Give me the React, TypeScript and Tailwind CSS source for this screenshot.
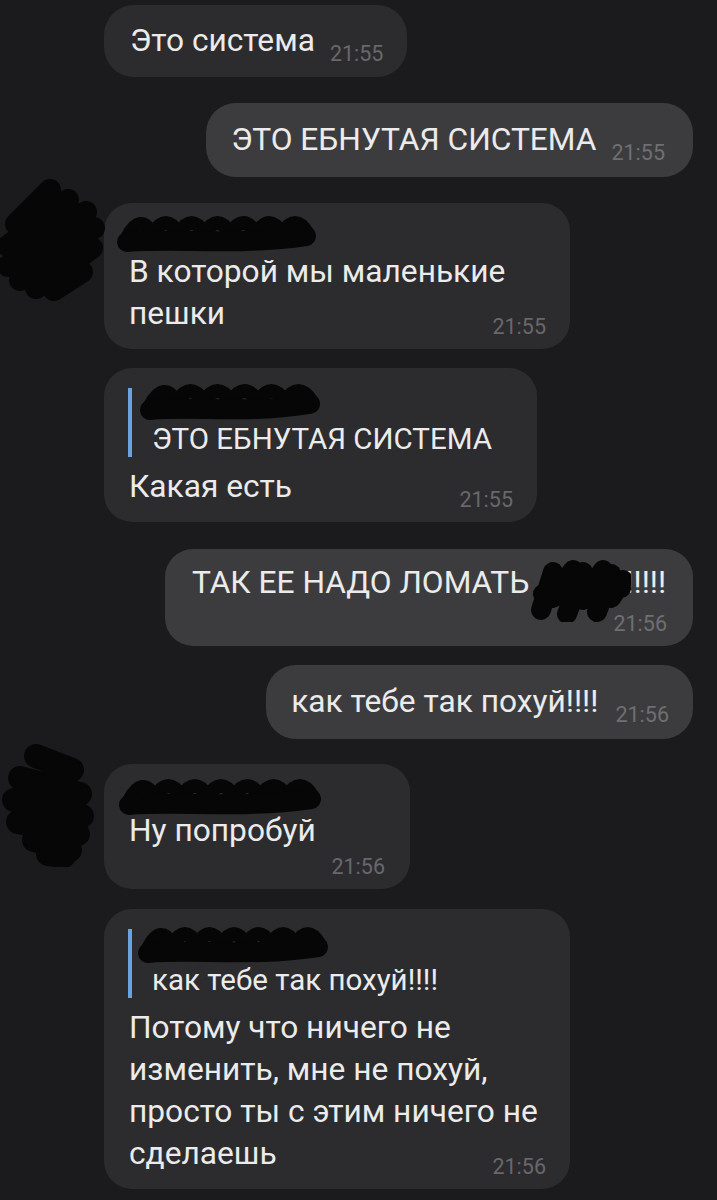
import React from "react";

const font = "font-['Roboto','Noto_Sans',sans-serif]";

function Time({ t, out = false }: { t: string; out?: boolean }) {
  return (
    <span
      className={`text-[21.5px] leading-none whitespace-nowrap ${
        out ? "text-[#6f6f72]" : "text-[#68686b]"
      }`}
    >
      {t}
    </span>
  );
}

function NameScribble({ w = 205 }: { w?: number }) {
  const n = Math.max(4, Math.round((w - 20) / 26));
  const step = (w - 24) / n;
  let arches = `M12 30`;
  for (let i = 0; i < n; i++) {
    const x0 = 12 + i * step;
    arches += ` Q${(x0 + step / 2).toFixed(1)} 4 ${(x0 + step).toFixed(1)} 26`;
  }
  return (
    <svg width={w} height="50" viewBox={`0 0 ${w} 50`} className="block" fill="none">
      <path d={arches} stroke="#060606" strokeWidth="14" strokeLinecap="round" strokeLinejoin="round" />
      <path
        d={`M12 34 C${w * 0.3} 30, ${w * 0.6} 38, ${w - 14} 28`}
        stroke="#060606"
        strokeWidth="20"
        strokeLinecap="round"
      />
    </svg>
  );
}

function AvatarScribbleA() {
  return (
    <svg width="110" height="125" viewBox="0 0 110 125" fill="none">
      <path
        d="M16 46 L50 12 M8 68 L68 22 M8 88 L86 34 M20 102 L94 50 M36 110 L92 70 M54 112 L82 94"
        stroke="#060606"
        strokeWidth="22"
        strokeLinecap="round"
        strokeLinejoin="round"
      />
    </svg>
  );
}

function AvatarScribbleB() {
  return (
    <svg width="100" height="125" viewBox="0 0 100 125" fill="none">
      <path
        d="M36 14 L72 28 M20 36 L80 52 M14 58 L82 74 M18 80 L78 92 M34 98 L70 108 M48 112 L64 114"
        stroke="#060606"
        strokeWidth="24"
        strokeLinecap="round"
      />
    </svg>
  );
}

export default function App() {
  return (
    <div className={`min-h-[1200px] w-[717px] bg-[#1b1b1d] text-[#ebebeb] ${font} overflow-hidden`}>
      {/* 1 */}
      <div className="pl-[104px] pt-[5px]">
        <div className="inline-flex items-baseline rounded-[30px] bg-[#2c2c2f] pl-[26px] pr-[24px] py-[15px]">
          <span className="text-[31.7px] leading-[42px]">Это система</span>
          <span className="ml-[15px] translate-y-[10px]">
            <Time t="21:55" />
          </span>
        </div>
      </div>

      {/* 2 */}
      <div className="mt-[26px] flex justify-end pr-[24px]">
        <div className="inline-flex items-baseline rounded-[30px] bg-[#3c3c3f] pl-[25px] pr-[28px] py-[16px]">
          <span className="text-[31.7px] leading-[42px]">ЭТО ЕБНУТАЯ СИСТЕМА</span>
          <span className="ml-[15px] translate-y-[10px]">
            <Time t="21:55" out />
          </span>
        </div>
      </div>

      {/* 3 */}
      <div className="relative mt-[26px] pl-[104px]">
        <div className="absolute left-0 top-[-25px]">
          <AvatarScribbleA />
        </div>
        <div className="w-[466px] rounded-[28px] bg-[#2c2c2f] pl-[25px] pr-[24px] pt-[15px] pb-[14px]">
          <div className="relative h-[33px]">
            <div className="absolute left-[-14px] top-[-10px]">
              <NameScribble w={205} />
            </div>
          </div>
          <div className="text-[31.7px] leading-[42px]">В которой мы маленькие</div>
          <div className="flex items-baseline justify-between">
            <span className="text-[31.7px] leading-[42px]">пешки</span>
            <span className="translate-y-[10px]">
              <Time t="21:55" />
            </span>
          </div>
        </div>
      </div>

      {/* 4 */}
      <div className="mt-[19px] pl-[104px]">
        <div className="w-[433px] rounded-[28px] bg-[#2c2c2f] pl-[24px] pr-[24px] pt-[20px] pb-[14px]">
          <div className="border-l-[4px] border-[#6ba3df] pl-[20px]">
            <div className="relative h-[33px]">
              <div className="absolute left-[-14px] top-[-12px]">
                <NameScribble w={186} />
              </div>
            </div>
            <div className="text-[29.5px] leading-[36px]">ЭТО ЕБНУТАЯ СИСТЕМА</div>
          </div>
          <div className="mt-[9px] flex items-baseline justify-between pl-[1px]">
            <span className="text-[31.7px] leading-[42px]">Какая есть</span>
            <span className="translate-y-[10px]">
              <Time t="21:55" />
            </span>
          </div>
        </div>
      </div>

      {/* 5 */}
      <div className="mt-[27px] flex justify-end pr-[24px]">
        <div className="w-[528px] rounded-[28px] bg-[#3c3c3f] pl-[27px] pr-[26px] pt-[13px] pb-[11px]">
          <div className="text-[31.7px] leading-[42px] whitespace-nowrap">
            ТАК ЕЕ НАДО ЛОМАТЬ
            <span className="relative inline-block h-[42px] w-[96px] align-top">
              <svg
                width="104"
                height="64"
                viewBox="0 0 104 64"
                fill="none"
                className="absolute left-[-2px] top-[-4px]"
              >
                <path
                  d="M14 52 L26 14 M26 40 L46 12 M40 56 L56 14 M56 42 L76 12 M70 54 L84 16 M84 40 L96 22 M16 36 L94 30"
                  stroke="#060606"
                  strokeWidth="20"
                  strokeLinecap="round"
                />
              </svg>
            </span>
            !!!!!
          </div>
          <div className="mt-[9px] flex justify-end">
            <Time t="21:56" out />
          </div>
        </div>
      </div>

      {/* 6 */}
      <div className="mt-[19px] flex justify-end pr-[24px]">
        <div className="inline-flex items-baseline rounded-[30px] bg-[#3c3c3f] pl-[25px] pr-[24px] py-[16px]">
          <span className="text-[31.7px] leading-[42px]">как тебе так похуй!!!!</span>
          <span className="ml-[17px] translate-y-[10px]">
            <Time t="21:56" out />
          </span>
        </div>
      </div>

      {/* 7 */}
      <div className="relative mt-[25px] pl-[104px]">
        <div className="absolute left-[0px] top-[-22px]">
          <AvatarScribbleB />
        </div>
        <div className="w-[306px] rounded-[28px] bg-[#2c2c2f] pl-[25px] pr-[25px] pt-[15px] pb-[12px]">
          <div className="relative h-[31px]">
            <div className="absolute left-[-12px] top-[-8px]">
              <NameScribble w={208} />
            </div>
          </div>
          <div className="text-[31.7px] leading-[42px]">Ну попробуй</div>
          <div className="mt-[4px] flex justify-end">
            <Time t="21:56" />
          </div>
        </div>
      </div>

      {/* 8 */}
      <div className="mt-[20px] pl-[104px]">
        <div className="w-[466px] rounded-[28px] bg-[#2c2c2f] pl-[24px] pr-[24px] pt-[20px] pb-[14px]">
          <div className="border-l-[4px] border-[#6ba3df] pl-[20px]">
            <div className="relative h-[33px]">
              <div className="absolute left-[-16px] top-[-10px]">
                <NameScribble w={196} />
              </div>
            </div>
            <div className="text-[29.5px] leading-[36px]">как тебе так похуй!!!!</div>
          </div>
          <div className="mt-[9px] pl-[1px] text-[31.7px] leading-[42px] whitespace-nowrap">
            <div>Потому что ничего не</div>
            <div>изменить, мне не похуй,</div>
            <div>просто ты с этим ничего не</div>
            <div className="flex items-baseline justify-between">
              <span>сделаешь</span>
              <span className="translate-y-[10px]">
                <Time t="21:56" />
              </span>
            </div>
          </div>
        </div>
      </div>
    </div>
  );
}
